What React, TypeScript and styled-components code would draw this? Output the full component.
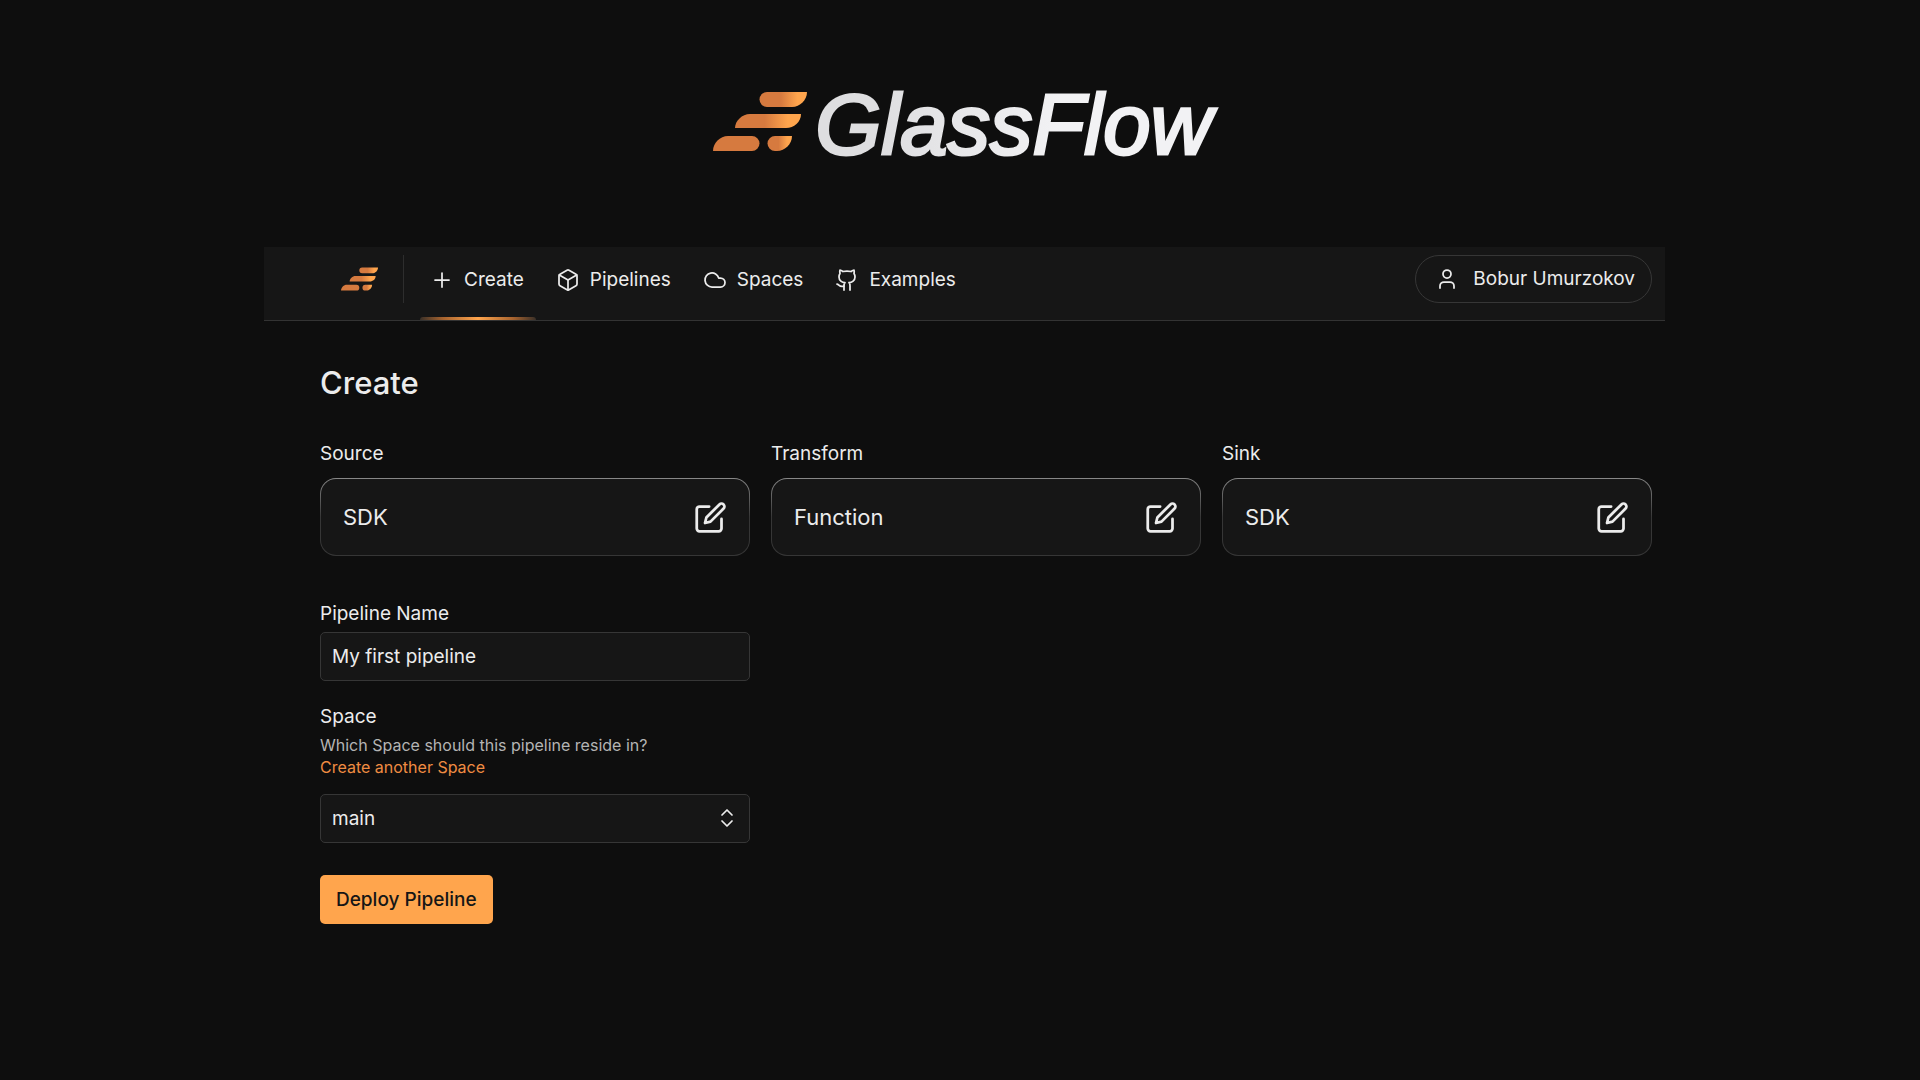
import React, { useState } from "react";
import styled, { createGlobalStyle } from "styled-components";
import { Box, ChevronsUpDown, Cloud, Github, Plus, User } from "lucide-react";

const Global = createGlobalStyle`
  *, *::before, *::after { box-sizing: border-box; }
  body {
    margin: 0;
    background: #0e0e0e;
    color: #ececec;
    font-family: Inter, "Liberation Sans", sans-serif;
    font-size: 19px;
    line-height: 24px;
  }
  button, input, select { font: inherit; color: inherit; }
`;

const Page = styled.div`
  min-height: 100vh;
  padding: 75px 255px 0 264px;
`;

const Brand = styled.header`
  display: flex;
  justify-content: center;
  gap: 8px;
  height: 172px;
  padding-top: 17px;
`;

const Wordmark = styled.h1`
  margin: -17px -8px 0 0;
  padding-right: 12px;
  height: 100px;
  font: italic 400 85px/100px "Liberation Sans", Arial, sans-serif;
  color: transparent;
  -webkit-text-stroke: 3px transparent;
  background: linear-gradient(90deg, #dedee0 15%, #f2f2f4 60%);
  background-clip: text;
  -webkit-background-clip: text;
`;

const NavBar = styled.nav`
  display: flex;
  align-items: flex-start;
  height: 74px;
  padding: 8px 13px 0 77px;
  background: #161616;
  border-bottom: 1px solid #333333;
`;

const HomeLink = styled.a`
  display: flex;
  align-items: center;
  height: 48px;
  padding-right: 25px;
  border-right: 1px solid #2d2d2d;
`;

const Tabs = styled.div`
  display: flex;
  margin-left: 16px;
  flex: 1;
`;

const Tab = styled.a<{ $active?: boolean }>`
  position: relative;
  display: flex;
  align-items: center;
  gap: 10px;
  height: 65px;
  padding: 0 12px 16px 10px;
  color: inherit;
  text-decoration: none;
  margin-right: 10px;

  &::after {
    content: "";
    display: ${(p) => (p.$active ? "block" : "none")};
    position: absolute;
    left: 0;
    right: 0;
    bottom: 0;
    height: 3px;
    border-radius: 3px 3px 0 0;
    background: linear-gradient(90deg, #3a3028, #a8642f 20%, #ffa54d 50%, #a8642f 80%, #3a3028);
  }
`;

const Account = styled.button`
  display: flex;
  align-items: center;
  gap: 14px;
  height: 48px;
  padding: 0 16px 0 19px;
  border: 1px solid #363636;
  border-radius: 24px;
  background: transparent;
`;

const Main = styled.main`
  padding: 46px 13px 0 56px;
`;

const Title = styled.h2`
  margin: 0;
  font-size: 31px;
  line-height: 32px;
  font-weight: 500;
`;

const Stages = styled.div`
  display: grid;
  grid-template-columns: repeat(3, 1fr);
  gap: 21px;
  margin-top: 43px;
`;

const Stage = styled.section``;

const StageLabel = styled.h3`
  margin: 0 0 12px;
  font: inherit;
`;

const Card = styled.button`
  display: flex;
  align-items: center;
  justify-content: space-between;
  width: 100%;
  height: 78px;
  padding: 0 22px;
  border: 1px solid transparent;
  border-radius: 16px;
  background:
    linear-gradient(#161616, #161616) padding-box,
    linear-gradient(180deg, #888888, #363636 50%, #363636) border-box;
  font-size: 22px;
`;

const Form = styled.form`
  display: grid;
  grid-template-columns: repeat(3, 1fr);
  column-gap: 21px;
  margin-top: 46px;
`;

const Fields = styled.div`
  display: flex;
  flex-direction: column;
`;

const Label = styled.label`
  display: block;
`;

const Field = styled.div`
  position: relative;
  margin-top: 6px;

  & > svg {
    position: absolute;
    right: 11px;
    top: 12px;
    pointer-events: none;
  }
`;

const controlStyle = `
  display: block;
  width: 100%;
  height: 49px;
  padding: 0 11px;
  border: 1px solid #363636;
  border-radius: 5px;
  background: #161616;
  outline: none;
`;

const TextInput = styled.input`${controlStyle}`;

const Select = styled.select`
  ${controlStyle}
  appearance: none;
`;

const SpaceGroup = styled.div`
  margin-top: 24px;
`;

const Hint = styled.p`
  margin: 5px 0 16px;
  font-size: 16px;
  line-height: 22px;
  color: #b4b4b4;
`;

const HintLink = styled.a`
  display: block;
  color: #f08c42;
  text-decoration: none;
`;

const Deploy = styled.button`
  align-self: flex-start;
  height: 49px;
  margin-top: 32px;
  padding: 0 16px;
  border: 0;
  border-radius: 5px;
  background: #ffa54d;
  color: #161616;
  font-weight: 500;
`;

function Mark({ width, height, id }: { width: number; height: number; id: string }) {
  return (
    <svg width={width} height={height} viewBox="0 0 94 59" role="img" aria-label="GlassFlow">
      <defs>
        <linearGradient id={id}>
          <stop offset="45%" stopColor="#d67a3f" />
          <stop offset="80%" stopColor="#ffa54d" />
        </linearGradient>
      </defs>
      <path fill={`url(#${id})`} d="M54 0H94C94 8 87 15 79 15H54A7 7 0 0 1 54 0Z" />
      <path fill={`url(#${id})`} d="M22 36C22 29 29 22 37 22H88C88 30 81 36 73 36Z" />
      <path fill="#d67a3f" d="M0 59C0 51 7 44 15 44H39A7 7 0 0 1 39 59Z" />
      <path fill={`url(#${id})`} d="M62 44H79C79 52 72 59 64 59H62A7 7 0 0 1 62 44Z" />
    </svg>
  );
}

function EditIcon() {
  return (
    <svg width="33" height="33" viewBox="0 0 24 24" fill="none" stroke="currentColor" strokeWidth="2" strokeLinecap="round" strokeLinejoin="round" aria-hidden="true">
      <path d="M11 4H4a2 2 0 0 0-2 2v14a2 2 0 0 0 2 2h14a2 2 0 0 0 2-2v-7" />
      <path d="M18.5 2.5a2.121 2.121 0 0 1 3 3L12 15l-4 1 1-4 9.5-9.5z" />
    </svg>
  );
}

const tabs = [
  { label: "Create", Icon: Plus },
  { label: "Pipelines", Icon: Box },
  { label: "Spaces", Icon: Cloud },
  { label: "Examples", Icon: Github },
];

const stages = [
  { label: "Source", value: "SDK" },
  { label: "Transform", value: "Function" },
  { label: "Sink", value: "SDK" },
];

export default function App() {
  const [name, setName] = useState("My first pipeline");

  return (
    <Page>
      <Global />
      <Brand>
        <Mark width={94} height={59} id="brand-mark" />
        <Wordmark>GlassFlow</Wordmark>
      </Brand>
      <NavBar>
        <HomeLink href="#home">
          <Mark width={37} height={24} id="nav-mark" />
        </HomeLink>
        <Tabs>
          {tabs.map(({ label, Icon }) => (
            <Tab key={label} href={`#${label}`} $active={label === "Create"}>
              <Icon size={24} strokeWidth={1.75} />
              {label}
            </Tab>
          ))}
        </Tabs>
        <Account type="button">
          <User size={24} strokeWidth={1.75} />
          Bobur Umurzokov
        </Account>
      </NavBar>
      <Main>
        <Title>Create</Title>
        <Stages>
          {stages.map(({ label, value }) => (
            <Stage key={label}>
              <StageLabel>{label}</StageLabel>
              <Card type="button" aria-label={`${label}: ${value}`}>
                {value}
                <EditIcon />
              </Card>
            </Stage>
          ))}
        </Stages>
        <Form onSubmit={(e) => e.preventDefault()}>
          <Fields>
            <Label htmlFor="pipeline-name">Pipeline Name</Label>
            <Field>
              <TextInput id="pipeline-name" value={name} onChange={(e) => setName(e.target.value)} />
            </Field>
            <SpaceGroup>
              <Label htmlFor="space">Space</Label>
              <Hint>
                Which Space should this pipeline reside in?
                <HintLink href="#new-space">Create another Space</HintLink>
              </Hint>
              <Field>
                <Select id="space" defaultValue="main">
                  <option value="main">main</option>
                </Select>
                <ChevronsUpDown size={24} strokeWidth={1.75} />
              </Field>
            </SpaceGroup>
            <Deploy type="submit">Deploy Pipeline</Deploy>
          </Fields>
        </Form>
      </Main>
    </Page>
  );
}
